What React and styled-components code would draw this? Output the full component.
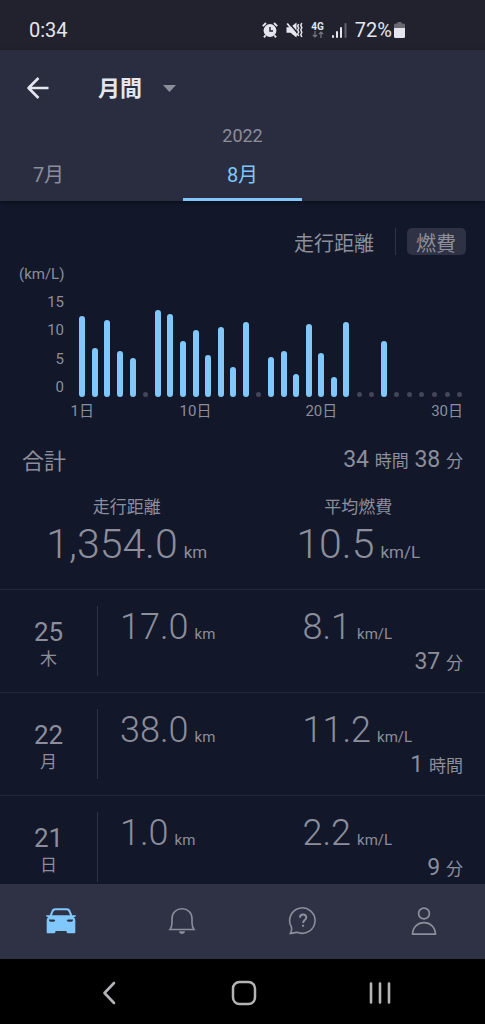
import React from 'react'
import styled, { createGlobalStyle } from 'styled-components'

const colors = {
  status: '#21222d',
  header: '#2a2d3f',
  page: '#12172a',
  tabBar: '#2f3245',
  line: '#23283a',
  divider: '#2f3345',
  pill: '#2f3244',
  dot: '#444556',
  text: '#8c8e9b',
  white: '#e4e6ee',
  blue: '#80c8fc',
  system: '#b4b4b6',
}

const GlobalStyle = createGlobalStyle`
  *, *::before, *::after {
    box-sizing: border-box;
  }

  body {
    margin: 0;
    background: ${colors.page};
    color: ${colors.text};
    font-family: Roboto, "Noto Sans CJK JP", sans-serif;
  }

  button, select {
    margin: 0;
    padding: 0;
    border: 0;
    background: none;
    color: inherit;
    font: inherit;
    cursor: pointer;
  }

  svg {
    display: block;
  }
`

const Screen = styled.div`
  display: flex;
  flex-direction: column;
  height: 100vh;
`

const StatusBar = styled.div`
  display: flex;
  flex: none;
  align-items: center;
  justify-content: space-between;
  height: 50px;
  padding: 10px 80px 0 29px;
  background: ${colors.status};
  color: ${colors.white};
  font-size: 20px;
  line-height: 24px;
`

const StatusIcons = styled.div`
  display: flex;
  align-items: center;
  gap: 8px;
`

const Network = styled.span`
  display: flex;
  flex-direction: column;
  align-items: center;
  font-size: 10px;
  font-weight: 700;
  line-height: 9px;
`

const Battery = styled.span`
  display: flex;
  align-items: center;
  gap: 2px;
`

const Header = styled.header`
  flex: none;
  background: ${colors.header};
  box-shadow: 0 1px 4px rgba(0, 0, 0, 0.5);
  z-index: 1;
`

const TitleRow = styled.div`
  display: flex;
  align-items: center;
  gap: 48px;
  height: 76px;
  padding: 0 26px;
`

const IconButton = styled.button`
  display: flex;
  align-items: center;
  justify-content: center;
`

const Picker = styled.label`
  position: relative;

  svg {
    position: absolute;
    top: 13px;
    right: 1px;
    pointer-events: none;
  }
`

const Select = styled.select`
  appearance: none;
  display: block;
  height: 32px;
  padding: 2px 34px 0 0;
  outline: none;
  color: ${colors.white};
  font-size: 22px;
  font-weight: 700;
  line-height: 30px;

  option {
    background: ${colors.header};
  }
`

const Year = styled.div`
  font-size: 18px;
  line-height: 20px;
  text-align: center;
`

const MonthTabs = styled.div`
  display: grid;
  grid-template-columns: 1fr 3fr 1fr;
  justify-items: center;
`

const MonthTab = styled.button`
  width: 100%;
  max-width: 119px;
  height: 55px;
  padding-top: 6px;
  border-bottom: 3px solid ${(p) => (p.$active ? colors.blue : 'transparent')};
  color: ${(p) => (p.$active ? colors.blue : colors.text)};
  font-size: 20px;
  line-height: 24px;
`

const Content = styled.main`
  flex: 1;
  min-height: 0;
  overflow-y: auto;
  scrollbar-width: none;
`

const Modes = styled.div`
  display: flex;
  align-items: center;
  justify-content: flex-end;
  padding: 27px 19px 0;
`

const Mode = styled.button`
  height: 27px;
  padding: 6px 10px 0 9px;
  border-radius: 5px;
  background: ${(p) => (p.$active ? colors.pill : 'none')};
  font-size: 20px;
  line-height: 21px;
`

const ModeDivider = styled.span`
  width: 1px;
  height: 27px;
  margin: 0 11px;
  background: ${colors.divider};
`

const Chart = styled.section`
  display: grid;
  grid-template-columns: 64px 1fr;
  column-gap: 12px;
  padding: 9px 19px 0 0;
  font-size: 15px;
  line-height: 20px;
`

const Unit = styled.div`
  grid-column: 1 / -1;
  padding-left: 19px;
`

const Scale = styled.div`
  display: flex;
  flex-direction: column;
  justify-content: space-between;
  height: 105px;
  margin-top: 8px;
  text-align: right;
`

const Bars = styled.div`
  display: grid;
  grid-template-columns: repeat(31, minmax(0, 1fr));
  align-items: end;
  justify-items: center;
  height: 113px;
`

const Bar = styled.span`
  width: 6px;
  border-radius: 3px;
  background: ${colors.blue};
`

const Dot = styled.span`
  width: 5px;
  height: 5px;
  border-radius: 50%;
  background: ${colors.dot};
`

const Days = styled.div`
  display: grid;
  grid-column: 2;
  grid-template-columns: repeat(31, minmax(0, 1fr));
  height: 20px;
  margin-top: 4px;
`

const Day = styled.span`
  display: flex;
  justify-content: center;
  white-space: nowrap;
`

const SummaryHead = styled.div`
  display: flex;
  align-items: flex-start;
  justify-content: space-between;
  padding: 25px 22px 0;
`

const SummaryTitle = styled.h2`
  margin: 0;
  font-size: 22px;
  font-weight: 400;
  line-height: 32px;
`

const Time = styled.div`
  font-size: 23px;
  line-height: 28px;
  text-align: right;

  small {
    font-size: 17px;
    line-height: 20px;
  }
`

const Totals = styled.div`
  display: grid;
  grid-template-columns: 1fr 1fr;
  padding: 19px 11px 18px;
  text-align: center;
`

const TotalLabel = styled.div`
  font-size: 17px;
  line-height: 20px;
`

const Figure = styled.div`
  font-size: ${(p) => (p.$large ? 41 : 36)}px;
  font-weight: 300;
  line-height: ${(p) => (p.$large ? 54 : 42)}px;
  white-space: nowrap;

  small {
    margin-left: 6px;
    font-size: ${(p) => (p.$large ? 17 : 15)}px;
    font-weight: 400;
    line-height: 20px;
  }
`

const List = styled.ul`
  margin: 0;
  padding: 0;
  list-style: none;
`

const Row = styled.li`
  display: grid;
  grid-template-columns: 97px 1fr;
  padding: 16px 0;
  border-top: 1px solid ${colors.line};
`

const DateCell = styled.div`
  display: flex;
  flex-direction: column;
  align-items: center;
  padding-top: 11px;
  font-size: 17px;
  line-height: 22px;

  strong {
    font-size: 26px;
    font-weight: 400;
    line-height: 31px;
  }
`

const Details = styled.div`
  display: grid;
  grid-template-columns: 1fr 1fr;
  height: 70px;
  padding-left: 22px;
  border-left: 1px solid ${colors.divider};

  ${Time} {
    grid-column: 1 / -1;
    padding-right: 22px;
  }
`

const TabBar = styled.nav`
  display: grid;
  flex: none;
  grid-template-columns: repeat(4, 1fr);
  height: 75px;
  padding-bottom: 2px;
  background: ${colors.tabBar};
`

const SystemBar = styled.nav`
  display: grid;
  flex: none;
  grid-template-columns: repeat(3, 1fr);
  height: 65px;
  padding: 3px 37px 0 41px;
  background: #000;
`

const AlarmIcon = () => (
  <svg width="16" height="16" viewBox="0 0 16 16" fill="none" stroke={colors.white}>
    <circle cx="8" cy="8.5" r="6.4" fill={colors.white} stroke="none" />
    <path d="M.8 4.2 4 1M15.200 4.200 12 1M3.600 13.200 2 15.400M12.400 13.200 14 15.400" strokeWidth="1.900" />
    <path d="M8 5v4h3" stroke={colors.status} strokeWidth="1.400" />
  </svg>
)

const MuteIcon = () => (
  <svg width="17" height="16" viewBox="0 0 17 16">
    <path d="M.5 5.200h4L10.500 .500v15L4.500 10.800h-4z" fill={colors.white} />
    <path d="M2.500 .500 12 11.500" stroke={colors.status} strokeWidth="1.500" />
    <path d="M1.200 1.500 11 13.500" stroke={colors.white} strokeWidth="1.800" />
    <path
      d="m12.700 2-1 2 1 2-1 2 1 2-1 2 1 2M15.800 1l-1 2.300 1 2.300-1 2.400 1 2.300-1 2.400 1 2.300"
      fill="none"
      stroke={colors.white}
      strokeWidth="1.500"
    />
  </svg>
)

const DataArrows = () => (
  <svg width="12" height="7" viewBox="0 0 12 7" fill="none" stroke="#777983" strokeWidth="1.2">
    <path d="M3 0v6M.8 3.8 3 6l2.2-2.2M9 7V1M6.8 3.2 9 1l2.2 2.2" />
  </svg>
)

const SignalIcon = () => (
  <svg width="15" height="15" viewBox="0 0 15 15" fill={colors.white}>
    <rect y="12" width="2" height="3" rx="1" />
    <rect x="4" y="8" width="2" height="7" rx="1" />
    <rect x="8" y="4" width="2" height="11" rx="1" />
    <rect x="12.5" width="2" height="15" rx="1" fill="#62646d" />
  </svg>
)

const BatteryIcon = () => (
  <svg width="11" height="16" viewBox="0 0 11 16">
    <path d="M3.5 0h4v1.5h2A1.5 1.5 0 0 1 11 3v4H0V3a1.5 1.5 0 0 1 1.5-1.5h2z" fill="#686a72" />
    <path d="M0 6h11v8.5a1.5 1.5 0 0 1-1.5 1.5h-8A1.5 1.5 0 0 1 0 14.5z" fill={colors.white} />
  </svg>
)

const BackArrow = () => (
  <svg width="24" height="24" viewBox="0 0 24 24" fill="none" stroke={colors.white} strokeWidth="2.6">
    <path d="M12.500 2 2.500 12l10 10M2.500 12h20" strokeLinejoin="round" />
  </svg>
)

const Triangle = () => (
  <svg width="13" height="7" viewBox="0 0 13 7" fill={colors.text}>
    <path d="M0 0h13L6.5 7z" />
  </svg>
)

const CarIcon = () => (
  <svg width="32" height="28" viewBox="0 0 32 28">
    <path
      d="M10.2 1.2h11.600c1.700 0 2.800.8 3.500 2.300l2 4.700h3.200c.4 0 .6.3.5.6-.2.7-.8 1-1.500 1.100l-.9.1c1.200.9 1.700 2 1.700 3.600v11.800c0 .5-.3.8-.8.8h-6.900c-.4 0-.7-.3-.8-.7l-.4-1.500H10.600l-.4 1.500c-.1.4-.4.7-.8.7H2.500c-.5 0-.8-.3-.8-.8V13.600c0-1.600.5-2.700 1.700-3.600L2.500 9.900C1.800 9.800 1.200 9.500 1 8.800c-.1-.3.1-.6.5-.6h3.200l2-4.700c.7-1.500 1.800-2.300 3.500-2.300z"
      fill={colors.blue}
    />
    <path
      d="M11 3.200h10c1.400 0 2.200.5 2.700 1.600l1.300 3.400H7l1.300-3.400C8.800 3.700 9.600 3.200 11 3.200zM4 12.600h5.200l1.200 1.100c-.6.700-1.500 1-2.500 1H5.500c-.9 0-1.500-.8-1.500-2.100zM28 12.600h-5.200l-1.200 1.100c.6.7 1.500 1 2.500 1h2.400c.9 0 1.500-.8 1.500-2.100z"
      fill={colors.tabBar}
    />
  </svg>
)

const BellIcon = () => (
  <svg width="28" height="28" viewBox="0 0 28 28" fill="none" stroke={colors.text} strokeWidth="1.6">
    <path d="M2 22.500C3.700 20.400 4 18 4 15.500V11.500C4 5.800 8.300 1.800 14 1.800s10 4 10 9.700v4c0 2.500.3 4.900 2 7z" />
    <path d="M11 24.200h6c-.2 1.700-1.400 2.800-3 2.800s-2.800-1.100-3-2.800z" fill={colors.text} stroke="none" />
  </svg>
)

const HelpIcon = () => (
  <svg width="30" height="30" viewBox="0 0 30 30" fill="none" stroke={colors.text} strokeWidth="1.6">
    <path d="M2.400 27.500C3.700 25.300 3.900 23.200 3.400 21A12.700 12.700 0 1 1 10 26.500c-2.500-.7-4.800.9-7.600 1z" />
    <path d="M12 11.700c0-2 1.300-3.200 3.100-3.200s3.100 1.100 3.100 2.900c0 2.600-3.100 2.700-3.100 5.600M15.100 18.700v2" strokeWidth="2" />
  </svg>
)

const UserIcon = () => (
  <svg width="28" height="30" viewBox="0 0 28 30" fill="none" stroke={colors.text} strokeWidth="1.7">
    <circle cx="14" cy="7.5" r="5.4" />
    <path d="M2.600 28.200c0-6.900 5-11.600 11.400-11.600s11.400 4.700 11.400 11.600z" />
  </svg>
)

const SystemBack = () => (
  <svg width="14" height="24" viewBox="0 0 14 24" fill="none" stroke={colors.system} strokeWidth="2.6">
    <path d="M12 2 2.500 12 12 22" strokeLinecap="round" strokeLinejoin="round" />
  </svg>
)

const SystemHome = () => (
  <svg width="26" height="26" viewBox="0 0 26 26" fill="none" stroke={colors.system} strokeWidth="2.5">
    <rect x="2" y="2" width="22" height="22" rx="6.5" />
  </svg>
)

const SystemRecents = () => (
  <svg width="22" height="24" viewBox="0 0 22 24" stroke={colors.system} strokeWidth="2.6" strokeLinecap="round">
    <path d="M2 2.500v19M11 2.500v19M20 2.500v19" />
  </svg>
)

const economy = [
  12.1, 6.9, 11.5, 6.5, 5.3, 0, 13.1, 12.4, 8.1, 9.8, 5.8, 10.3, 3.9, 11.1, 0, 5.5,
  6.5, 2.7, 10.8, 6.1, 2.2, 11.2, 0, 0, 8.1, 0, 0, 0, 0, 0, 0,
]

const labelledDays = [1, 10, 20, 30]

const trips = [
  { date: 25, weekday: '木', distance: '17.0', rate: '8.1', time: [['37', '分']] },
  { date: 22, weekday: '月', distance: '38.0', rate: '11.2', time: [['1', '時間']] },
  { date: 21, weekday: '日', distance: '1.0', rate: '2.2', time: [['9', '分']] },
]

// bars keep a rounded 6px foot under the zero line
const barHeight = (value) => Math.round(value * 6.2 + 6)

const Duration = ({ parts }) => (
  <Time>
    {parts.map(([value, unit]) => (
      <React.Fragment key={unit}>
        {value} <small>{unit}</small>{' '}
      </React.Fragment>
    ))}
  </Time>
)

const FuelChart = () => (
  <Chart aria-label="燃費">
    <Unit>(km/L)</Unit>
    <Scale>
      {[15, 10, 5, 0].map((n) => <span key={n}>{n}</span>)}
    </Scale>
    <Bars>
      {economy.map((value, i) => (
        value ? <Bar key={i} style={{ height: barHeight(value) }} /> : <Dot key={i} />
      ))}
    </Bars>
    <Days>
      {economy.map((_, i) => (
        <Day key={i}>{labelledDays.includes(i + 1) && `${i + 1}日`}</Day>
      ))}
    </Days>
  </Chart>
)

const Trip = ({ trip }) => (
  <Row>
    <DateCell>
      <strong>{trip.date}</strong>
      {trip.weekday}
    </DateCell>
    <Details>
      <Figure>{trip.distance}<small>km</small></Figure>
      <Figure>{trip.rate}<small>km/L</small></Figure>
      <Duration parts={trip.time} />
    </Details>
  </Row>
)

const App = () => (
  <Screen lang="ja">
    <GlobalStyle />
    <StatusBar>
      <span>0:34</span>
      <StatusIcons>
        <AlarmIcon />
        <MuteIcon />
        <Network>4G<DataArrows /></Network>
        <SignalIcon />
        <Battery>72%<BatteryIcon /></Battery>
      </StatusIcons>
    </StatusBar>
    <Header>
      <TitleRow>
        <IconButton aria-label="戻る"><BackArrow /></IconButton>
        <Picker>
          <Select aria-label="期間" defaultValue="month">
            <option value="month">月間</option>
          </Select>
          <Triangle />
        </Picker>
      </TitleRow>
      <Year>2022</Year>
      <MonthTabs>
        <MonthTab>7月</MonthTab>
        <MonthTab $active>8月</MonthTab>
      </MonthTabs>
    </Header>
    <Content>
      <Modes>
        <Mode>走行距離</Mode>
        <ModeDivider />
        <Mode $active>燃費</Mode>
      </Modes>
      <FuelChart />
      <section>
        <SummaryHead>
          <SummaryTitle>合計</SummaryTitle>
          <Duration parts={[['34', '時間'], ['38', '分']]} />
        </SummaryHead>
        <Totals>
          <div>
            <TotalLabel>走行距離</TotalLabel>
            <Figure $large>1,354.0<small>km</small></Figure>
          </div>
          <div>
            <TotalLabel>平均燃費</TotalLabel>
            <Figure $large>10.5<small>km/L</small></Figure>
          </div>
        </Totals>
      </section>
      <List>
        {trips.map((trip) => <Trip key={trip.date} trip={trip} />)}
      </List>
    </Content>
    <TabBar>
      <IconButton aria-label="車"><CarIcon /></IconButton>
      <IconButton aria-label="通知"><BellIcon /></IconButton>
      <IconButton aria-label="ヘルプ"><HelpIcon /></IconButton>
      <IconButton aria-label="アカウント"><UserIcon /></IconButton>
    </TabBar>
    <SystemBar>
      <IconButton aria-label="前へ"><SystemBack /></IconButton>
      <IconButton aria-label="ホーム"><SystemHome /></IconButton>
      <IconButton aria-label="履歴"><SystemRecents /></IconButton>
    </SystemBar>
  </Screen>
)

export default App
